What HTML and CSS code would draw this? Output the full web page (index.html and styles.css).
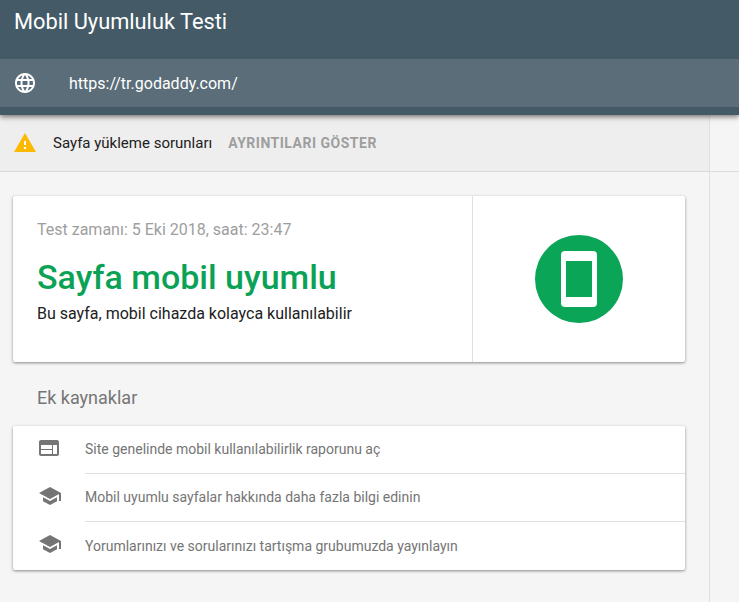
FILE: index.html
```html
<!DOCTYPE html>
<html lang="tr">
<head>
    <meta charset="UTF-8">
    <meta name="viewport" content="width=device-width, initial-scale=1.0">
    <title>Mobil Uyumluluk Testi</title>
    <link rel="stylesheet" href="styles.css">
</head>
<body>
    <header class="header">
        <h1 class="title">Mobil Uyumluluk Testi</h1>
        <div class="url-bar">
            <svg class="globe" viewBox="0 0 24 24" width="24" height="24">
                <path fill="#fff" d="M11.99 2C6.47 2 2 6.48 2 12s4.47 10 9.99 10C17.52 22 22 17.52 22 12S17.52 2 11.99 2zm6.93 6h-2.95c-.32-1.25-.78-2.45-1.38-3.56 1.84.63 3.37 1.91 4.33 3.56zM12 4.04c.83 1.2 1.48 2.53 1.91 3.96h-3.82c.43-1.43 1.08-2.76 1.91-3.96zM4.26 14C4.1 13.36 4 12.69 4 12s.1-1.36.26-2h3.38c-.08.66-.14 1.32-.14 2s.06 1.34.14 2H4.26zm.82 2h2.95c.32 1.25.78 2.45 1.38 3.56-1.84-.63-3.37-1.9-4.33-3.56zm2.95-8H5.08c.96-1.66 2.49-2.93 4.33-3.56C8.81 5.55 8.35 6.75 8.03 8zM12 19.96c-.83-1.2-1.48-2.53-1.91-3.96h3.82c-.43 1.43-1.08 2.76-1.91 3.96zM14.34 14H9.66c-.09-.66-.16-1.32-.16-2s.07-1.35.16-2h4.68c.09.65.16 1.32.16 2s-.07 1.34-.16 2zm.25 5.56c.6-1.11 1.06-2.31 1.38-3.56h2.95c-.96 1.65-2.49 2.93-4.33 3.56zM16.36 14c.08-.66.14-1.32.14-2s-.06-1.34-.14-2h3.38c.16.64.26 1.31.26 2s-.1 1.36-.26 2h-3.38z"/>
            </svg>
            <span class="url-text">https://tr.godaddy.com/</span>
        </div>
    </header>

    <div class="layout">
        <main class="content">
            <div class="warning-bar">
                <svg class="warning-icon" viewBox="0 0 24 24" width="24" height="24">
                    <path fill="#fdb900" d="M1 21h22L12 2 1 21z"/>
                    <path fill="#fff" d="M13 18h-2v-2h2v2zm0-4h-2v-4h2v4z"/>
                </svg>
                <span class="warning-text">Sayfa yükleme sorunları</span>
                <span class="warning-action">AYRINTILARI GÖSTER</span>
            </div>

            <section class="card result-card">
                <div class="result-info">
                    <div class="test-time">Test zamanı: 5 Eki 2018, saat: 23:47</div>
                    <h2 class="result-title">Sayfa mobil uyumlu</h2>
                    <div class="result-desc">Bu sayfa, mobil cihazda kolayca kullanılabilir</div>
                </div>
                <div class="result-badge">
                    <div class="badge-circle">
                        <div class="phone"><div class="phone-screen"></div></div>
                    </div>
                </div>
            </section>

            <h3 class="section-title">Ek kaynaklar</h3>

            <section class="card resource-card">
                <div class="resource-row">
                    <svg class="resource-icon web-icon" viewBox="0 0 24 24" width="24" height="24">
                        <path fill="#757575" d="M20 4H4c-1.1 0-1.99.9-1.99 2L2 18c0 1.1.9 2 2 2h16c1.1 0 2-.9 2-2V6c0-1.1-.9-2-2-2zm-5 14H4v-4h11v4zm0-5H4V9h11v4zm5 5h-4V9h4v9z"/>
                    </svg>
                    <span class="resource-text">Site genelinde mobil kullanılabilirlik raporunu aç</span>
                </div>
                <div class="resource-row">
                    <svg class="resource-icon" viewBox="0 0 24 24" width="24" height="24">
                        <path fill="#757575" d="M5 13.18v4L12 21l7-3.82v-4L12 17l-7-3.82zM12 3L1 9l11 6 9-4.91V17h2V9L12 3z"/>
                    </svg>
                    <span class="resource-text">Mobil uyumlu sayfalar hakkında daha fazla bilgi edinin</span>
                </div>
                <div class="resource-row">
                    <svg class="resource-icon" viewBox="0 0 24 24" width="24" height="24">
                        <path fill="#757575" d="M5 13.18v4L12 21l7-3.82v-4L12 17l-7-3.82zM12 3L1 9l11 6 9-4.91V17h2V9L12 3z"/>
                    </svg>
                    <span class="resource-text">Yorumlarınızı ve sorularınızı tartışma grubumuzda yayınlayın</span>
                </div>
            </section>
        </main>
        <aside class="gutter">
            <div class="gutter-top"></div>
        </aside>
    </div>
</body>
</html>
```

FILE: styles.css
```css
html, body {
    height: 100%;
}
body {
    margin: 0;
    background-color: #f5f5f5;
    font-family: Roboto, "Liberation Sans", sans-serif;
    overflow: hidden;
    display: flex;
    flex-direction: column;
}
.header {
    position: relative;
    z-index: 2;
    height: 115px;
    flex: none;
    background-color: #445a67;
    box-shadow: 0 2px 5px rgba(50, 35, 35, 0.6);
}
.title {
    margin: 0;
    height: 59px;
    padding: 9px 0 0 14px;
    box-sizing: border-box;
    color: #fff;
    font-size: 21.8px;
    line-height: 26px;
    font-weight: 400;
}
.url-bar {
    height: 48px;
    display: flex;
    align-items: center;
    background-color: #5a6d79;
}
.globe {
    margin-left: 13px;
}
.url-text {
    margin-left: 32px;
    color: #fff;
    font-size: 16px;
}
.layout {
    flex: 1;
    display: flex;
    min-height: 0;
}
.content {
    width: 709px;
    flex: none;
}
.gutter {
    flex: 1;
    border-left: 1px solid #e0e0e0;
}
.gutter-top {
    height: 56px;
    border-bottom: 1px solid #dcdcdc;
}
.warning-bar {
    height: 56px;
    display: flex;
    align-items: center;
    background-color: #eeeeee;
    border-bottom: 1px solid #d8d8d8;
}
.warning-icon {
    margin-left: 13px;
}
.warning-text {
    margin-left: 16px;
    color: #212121;
    font-size: 15px;
}
.warning-action {
    margin-left: 16px;
    color: #9e9e9e;
    font-size: 14px;
    font-weight: 700;
    letter-spacing: 0.5px;
}
.card {
    margin: 0 24px 0 13px;
    background-color: #fff;
    border-radius: 2px;
    box-shadow: 0 1px 3px rgba(0, 0, 0, 0.45);
}
.result-card {
    margin-top: 24px;
    height: 166px;
    display: flex;
}
.result-info {
    width: 460px;
    flex: none;
    padding: 24px 0 0 24px;
    box-sizing: border-box;
    border-right: 1px solid #e0e0e0;
}
.test-time {
    color: #9e9e9e;
    font-size: 16px;
    line-height: 20px;
}
.result-title {
    margin: 17px 0 0;
    color: #0ca256;
    font-size: 34px;
    line-height: 40px;
    font-weight: 500;
}
.result-desc {
    margin-top: 7px;
    color: #212121;
    font-size: 16px;
    line-height: 20px;
}
.result-badge {
    flex: 1;
    display: flex;
    align-items: center;
    justify-content: center;
}
.badge-circle {
    width: 88px;
    height: 88px;
    border-radius: 50%;
    background-color: #0ba557;
    display: flex;
    align-items: center;
    justify-content: center;
}
.phone {
    width: 36px;
    height: 56px;
    padding: 10px 5px;
    box-sizing: border-box;
    border-radius: 4px;
    background-color: #fff;
}
.phone-screen {
    height: 100%;
    background-color: #0ba557;
}
.section-title {
    margin: 24px 0 16px 37px;
    color: #757575;
    font-size: 18px;
    line-height: 24px;
    font-weight: 400;
}
.resource-card {
    height: 144px;
}
.resource-row {
    height: 48px;
    display: flex;
    align-items: center;
}
.resource-icon {
    margin: 0 0 4px 25px;
    flex: none;
}
.web-icon {
    margin-left: 24px;
    margin-right: 1px;
}
.resource-text {
    flex: 1;
    margin-left: 23px;
    height: 47px;
    line-height: 46px;
    color: #757575;
    font-size: 14px;
    border-bottom: 1px solid #e0e0e0;
}
.resource-row:last-child .resource-text {
    border-bottom: none;
}
```
